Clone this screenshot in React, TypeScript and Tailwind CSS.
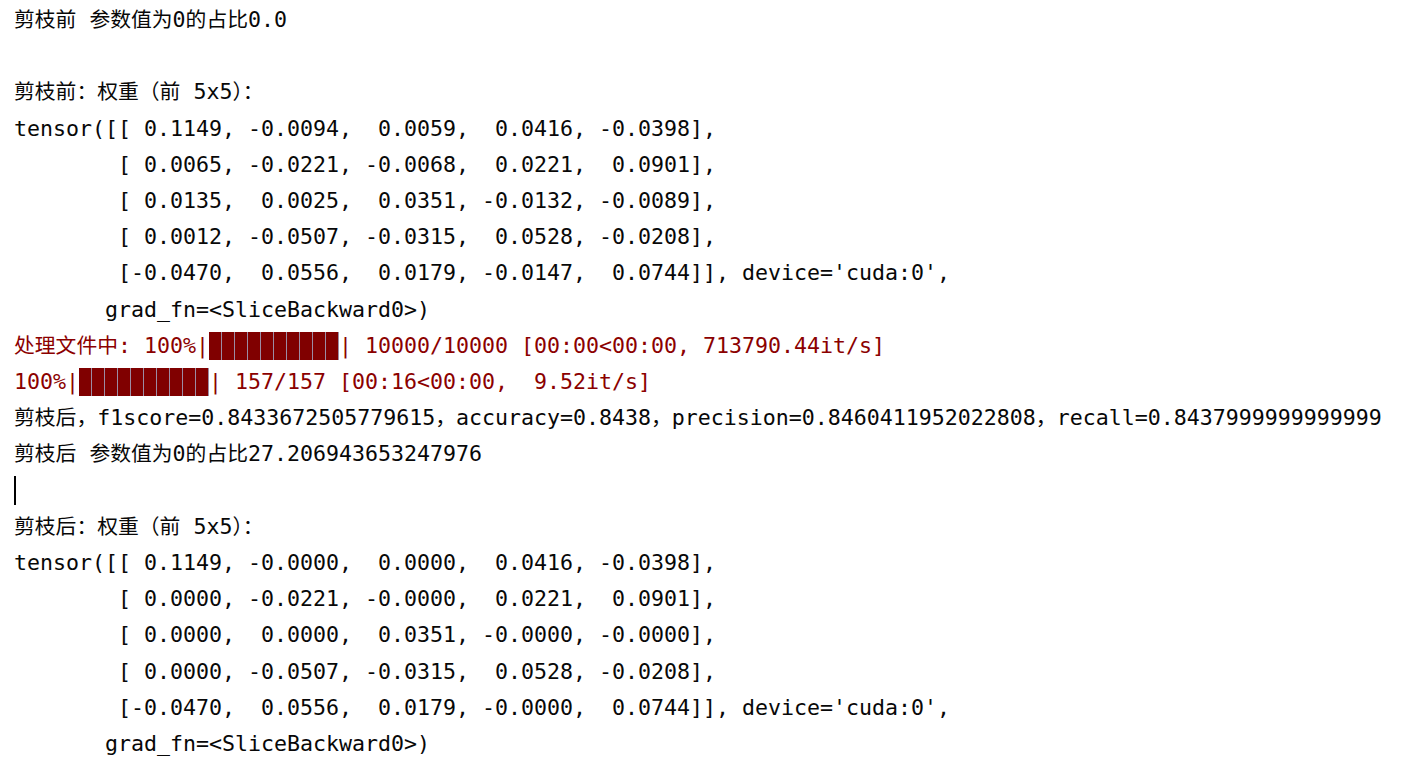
const Bar = () => (
  <span className="inline-flex align-top h-[36.2px] items-center">
    {Array.from({ length: 10 }).map((_, i) => (
      <span
        key={i}
        className="inline-block w-[13px] h-[28px] bg-[#800000] border-r border-[#9c8ca4]"
      />
    ))}
  </span>
);

// CJK glyphs in the console are a bit narrower than 2 cells
const T = ({ s }: { s: string }) => (
  <>
    {s.split(/([\u3000-\u9fff\uff00-\uffef]+)/).map((part, i) =>
      i % 2 === 1 ? (
        <span key={i} className="text-[20.8px]">{part}</span>
      ) : (
        part
      )
    )}
  </>
);

const black = "text-[#080808]";
const red = "text-[#8b0000]";

const before = [
  "tensor([[ 0.1149, -0.0094,  0.0059,  0.0416, -0.0398],",
  "        [ 0.0065, -0.0221, -0.0068,  0.0221,  0.0901],",
  "        [ 0.0135,  0.0025,  0.0351, -0.0132, -0.0089],",
  "        [ 0.0012, -0.0507, -0.0315,  0.0528, -0.0208],",
  "        [-0.0470,  0.0556,  0.0179, -0.0147,  0.0744]], device='cuda:0',",
  "       grad_fn=<SliceBackward0>)",
];

const after = [
  "tensor([[ 0.1149, -0.0000,  0.0000,  0.0416, -0.0398],",
  "        [ 0.0000, -0.0221, -0.0000,  0.0221,  0.0901],",
  "        [ 0.0000,  0.0000,  0.0351, -0.0000, -0.0000],",
  "        [ 0.0000, -0.0507, -0.0315,  0.0528, -0.0208],",
  "        [-0.0470,  0.0556,  0.0179, -0.0000,  0.0744]], device='cuda:0',",
  "       grad_fn=<SliceBackward0>)",
];

export default function App() {
  return (
    <div
      className="w-[1409px] h-[779px] bg-white overflow-hidden pl-[14px] pt-[2px] text-[21.6px] leading-[36.2px] whitespace-pre"
      style={{ fontFamily: '"DejaVu Sans Mono", "Noto Sans CJK SC", monospace' }}
    >
      <div className={black}><T s="剪枝前 参数值为0的占比0.0" /></div>
      <div className="h-[36.2px]" />
      <div className={black}><T s="剪枝前：权重（前 5x5）：" /></div>
      {before.map((l, i) => (
        <div key={i} className={black}>{l}</div>
      ))}
      <div className={red}>
        <T s="处理文件中" />: 100%|<Bar />| 10000/10000 [00:00&lt;00:00, 713790.44it/s]
      </div>
      <div className={red}>
        100%|<Bar />| 157/157 [00:16&lt;00:00,  9.52it/s]
      </div>
      <div className={black}>
        <T s="剪枝后，f1score=0.8433672505779615，accuracy=0.8438，precision=0.8460411952022808，recall=0.8437999999999999" />
      </div>
      <div className={black}><T s="剪枝后 参数值为0的占比27.206943653247976" /></div>
      <div className="h-[36.2px] flex items-center">
        <span className="inline-block w-[2px] h-[29px] bg-black" />
      </div>
      <div className={black}><T s="剪枝后：权重（前 5x5）：" /></div>
      {after.map((l, i) => (
        <div key={i} className={black}>{l}</div>
      ))}
    </div>
  );
}
